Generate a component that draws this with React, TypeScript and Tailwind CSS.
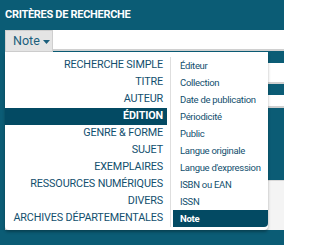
import React from "react";

const left = [
  "RECHERCHE SIMPLE",
  "TITRE",
  "AUTEUR",
  "ÉDITION",
  "GENRE & FORME",
  "SUJET",
  "EXEMPLAIRES",
  "RESSOURCES NUMÉRIQUES",
  "DIVERS",
  "ARCHIVES DÉPARTEMENTALES",
];
const right = [
  "Éditeur",
  "Collection",
  "Date de publication",
  "Périodicité",
  "Public",
  "Langue originale",
  "Langue d'expression",
  "ISBN ou EAN",
  "ISSN",
  "Note",
];

export default function App() {
  return (
    <div
      className="relative w-[284px] h-[245px] bg-[#0b5c75] overflow-hidden"
      style={{ fontFamily: "Roboto, 'Liberation Sans', sans-serif" }}
    >
      <div className="h-[30px] pl-[5px] pt-[8px] text-white font-bold text-[11px] leading-[14px] tracking-[-0.3px] whitespace-nowrap">
        CRITÈRES DE RECHERCHE
      </div>
      <div className="flex h-[22px] pl-[5px]">
        <div className="w-[48px] h-[22px] bg-[#e4e4e4] border border-[#cfcfcf] flex items-center pl-[7px] text-[#1b5f7c] text-[12.5px]">
          Note
          <svg width="7" height="4" viewBox="0 0 7 4" className="ml-[3px] mt-[1px]">
            <path d="M0 0h7L3.5 4z" fill="#1b5f7c" />
          </svg>
        </div>
        <div className="flex-1 h-[21px] bg-white border-b-2 border-[#d0d0d0]" />
      </div>
      <div className="mt-[11px] ml-[5px] h-[21px] bg-white border-b-2 border-[#d0d0d0]" />
      <div className="mt-[11px] ml-[5px] h-[13px] bg-white border-b-2 border-[#d0d0d0]" />
      <div className="mt-[72px] ml-[5px] h-[50px] bg-[#f4f4f4] border-t border-[#d8d8d8]" />

      <div className="absolute left-[5px] top-[52px] w-[263px] bg-white rounded-b-[4px] shadow-[0_2px_3px_rgba(0,0,0,0.3)] overflow-hidden pt-[5px] pb-[3px] flex">
        <div className="w-[162px] flex flex-col">
          {left.map((t) => (
            <div
              key={t}
              className={
                "h-[17px] flex items-center justify-end pr-[4px] text-[10.8px] leading-none tracking-[-0.15px] whitespace-nowrap " +
                (t === "ÉDITION" ? "bg-[#034a63] text-white font-bold" : "text-[#124f6e]")
              }
            >
              {t}
            </div>
          ))}
        </div>
        <div className="w-[6px] flex justify-center">
          <div className="w-px h-full bg-[#dedede]" />
        </div>
        <div className="flex-1 flex flex-col">
          {right.map((t) => (
            <div
              key={t}
              className={
                "h-[17px] flex items-center pl-[7px] text-[9.5px] leading-none tracking-[-0.3px] whitespace-nowrap " +
                (t === "Note" ? "bg-[#034a63] text-white font-bold rounded-br-[4px]" : "text-[#124f6e]")
              }
            >
              {t}
            </div>
          ))}
        </div>
      </div>
    </div>
  );
}
